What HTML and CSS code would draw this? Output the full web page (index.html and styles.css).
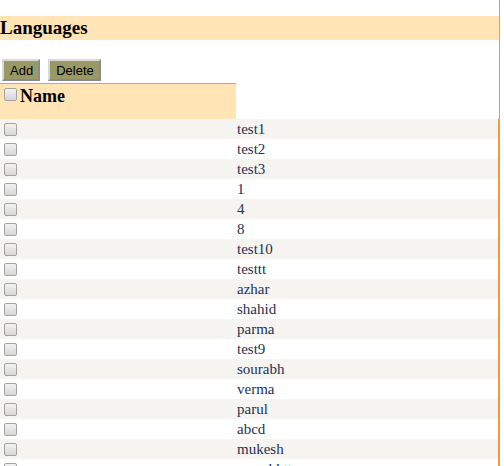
FILE: index.html
```html
<!DOCTYPE html>
<html lang="en">
<head>
    <meta charset="UTF-8">
    <title>Languages</title>
    <link rel="stylesheet" href="styles.css">
</head>
<body>
    <div class="page">
        <h1 class="title">Languages</h1>

        <div class="toolbar">
            <button class="btn">Add</button>
            <button class="btn">Delete</button>
        </div>

        <div class="grid-head">
            <div class="head-cell"><input type="checkbox" class="chk"><span>Name</span></div>
        </div>

        <div class="rows">
            <div class="row"><input type="checkbox" class="chk"><span class="name">test1</span></div>
            <div class="row"><input type="checkbox" class="chk"><span class="name">test2</span></div>
            <div class="row"><input type="checkbox" class="chk"><span class="name">test3</span></div>
            <div class="row"><input type="checkbox" class="chk"><span class="name">1</span></div>
            <div class="row"><input type="checkbox" class="chk"><span class="name">4</span></div>
            <div class="row"><input type="checkbox" class="chk"><span class="name">8</span></div>
            <div class="row"><input type="checkbox" class="chk"><span class="name">test10</span></div>
            <div class="row"><input type="checkbox" class="chk"><span class="name">testtt</span></div>
            <div class="row"><input type="checkbox" class="chk"><span class="name">azhar</span></div>
            <div class="row"><input type="checkbox" class="chk"><span class="name">shahid</span></div>
            <div class="row"><input type="checkbox" class="chk"><span class="name">parma</span></div>
            <div class="row"><input type="checkbox" class="chk"><span class="name">test9</span></div>
            <div class="row"><input type="checkbox" class="chk"><span class="name">sourabh</span></div>
            <div class="row"><input type="checkbox" class="chk"><span class="name">verma</span></div>
            <div class="row"><input type="checkbox" class="chk"><span class="name">parul</span></div>
            <div class="row"><input type="checkbox" class="chk"><span class="name">abcd</span></div>
            <div class="row"><input type="checkbox" class="chk"><span class="name">mukesh</span></div>
            <div class="row"><input type="checkbox" class="chk"><span class="name">saurabhtt</span></div>
        </div>
    </div>
</body>
</html>
```

FILE: styles.css
```css
body {
    margin: 0;
    font-family: "Liberation Serif", "Times New Roman", serif;
    background: #fff;
    color: #000;
    overflow: hidden;
}

.page {
    width: 499px;
    border-right: 1px solid #f7993a;
    padding-top: 16px;
    min-height: 470px;
}

.title {
    margin: 0;
    height: 24px;
    line-height: 24px;
    font-size: 19px;
    font-weight: bold;
    background-color: #ffe4b5;
}

.toolbar {
    display: flex;
    gap: 8px;
    padding: 19px 0 2px 2px;
}

.btn {
    margin: 0;
    height: 22px;
    padding: 0 5px 0 6px;
    font-family: "Liberation Sans", Arial, sans-serif;
    font-size: 13px;
    color: #000;
    background-color: #999966;
    border: 2px solid;
    border-color: #d8d8d8 #8a8a8a #8a8a8a #d8d8d8;
}

.grid-head {
    display: flex;
}

.head-cell {
    width: 236px;
    height: 36px;
    box-sizing: border-box;
    padding-top: 2px;
    border-top: 1px solid #f7993a;
    background-color: #ffe4b5;
    display: flex;
    align-items: flex-start;
    font-size: 18px;
    font-weight: bold;
    line-height: 20px;
}

.chk {
    appearance: none;
    -webkit-appearance: none;
    box-sizing: border-box;
    width: 13px;
    height: 13px;
    margin: 2px 3px 0 4px;
    border: 1px solid #a3a3a3;
    border-radius: 2px;
    background: linear-gradient(#f2f2f2, #d6d6d6);
}

.rows .row {
    display: grid;
    grid-template-columns: 237px 1fr;
    align-items: center;
    height: 20px;
    border-right: 1px solid #f7993a;
}

.rows .row .chk {
    margin: 0 0 0 4px;
}

.rows .row:nth-child(odd) {
    background-color: #f5f4f0;
}

.name {
    font-size: 15px;
    color: #253154;
    line-height: 20px;
}
```
